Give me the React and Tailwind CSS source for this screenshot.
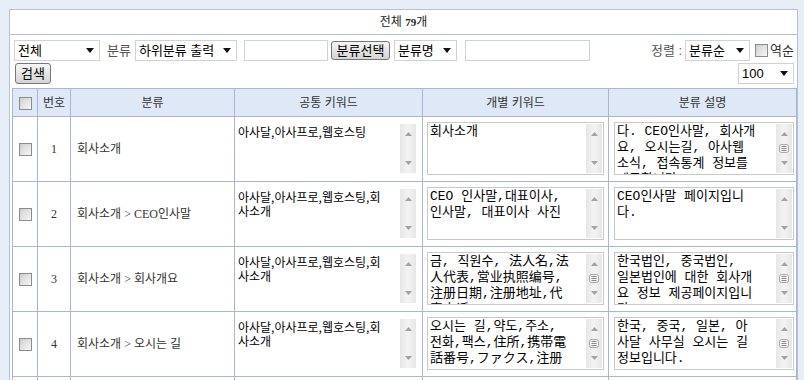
import React from 'react'

const SANS = 'font-["Liberation_Sans","Noto_Sans_CJK_KR",sans-serif]'
const SERIF = 'font-["Liberation_Serif","Noto_Sans_CJK_KR",serif]'
const MONO = 'font-["Liberation_Mono","Noto_Sans_CJK_KR",monospace]'

const COMMON = ['아사달,아사프로,웹호스팅,회', '사소개']

const ROWS = [
  {
    no: 1,
    cat: '회사소개',
    common: ['아사달,아사프로,웹호스팅'],
    kw: ['회사소개'],
    kwThumb: false,
    desc: ['다. CEO인사말, 회사개', '요, 오시는길, 아사웹', '소식, 접속통계 정보를', '제공합니다.'],
    descThumb: true,
  },
  {
    no: 2,
    cat: '회사소개 > CEO인사말',
    common: COMMON,
    kw: ['CEO 인사말,대표이사,', '인사말, 대표이사 사진'],
    kwThumb: false,
    desc: ['CEO인사말 페이지입니', '다.'],
    descThumb: false,
  },
  {
    no: 3,
    cat: '회사소개 > 회사개요',
    common: COMMON,
    kw: ['금, 직원수, 法人名,法', '人代表,営业执照编号,', '注册日期,注册地址,代', '表电话'],
    kwThumb: true,
    desc: ['한국법인, 중국법인,', '일본법인에 대한 회사개', '요 정보 제공페이지입니', '다.'],
    descThumb: true,
  },
  {
    no: 4,
    cat: '회사소개 > 오시는 길',
    common: COMMON,
    kw: ['오시는 길,약도,주소,', '전화,팩스,住所,携帯電', '話番号,ファクス,注册'],
    kwThumb: true,
    desc: ['한국, 중국, 일본, 아', '사달 사무실 오시는 길', '정보입니다.'],
    descThumb: true,
  },
  {
    no: 5,
    cat: '회사소개 > 아사웹소식',
    common: COMMON,
    kw: ['아사웹소식,공지사항'],
    kwThumb: false,
    desc: ['아사웹 소식 페이지입니', '다.'],
    descThumb: false,
  },
]

function Arrow() {
  return (
    <svg width="8" height="5" viewBox="0 0 8 5">
      <path d="M0 0h8L4 5z" fill="#111" />
    </svg>
  )
}

function Select({ label, className }) {
  return (
    <div
      className={`flex items-center justify-between h-[21px] border border-[#d2d2d2] bg-white pl-[3px] pr-[5px] text-[13px] text-black ${SANS} ${className}`}
    >
      <span className="whitespace-nowrap">{label}</span>
      <Arrow />
    </div>
  )
}

function Button({ children, className }) {
  return (
    <div
      className={`flex items-center justify-center border border-[#777] rounded-[3px] bg-gradient-to-b from-[#f6f6f6] to-[#d4d4d4] text-[13px] text-black ${SANS} ${className}`}
    >
      {children}
    </div>
  )
}

function Check() {
  return (
    <span className="inline-block align-middle w-[13px] h-[13px] border border-[#8c8c8c] bg-gradient-to-br from-[#cdcdcd] to-[#f7f7f7] p-[2px]">
      <span className="block w-full h-full bg-gradient-to-br from-[#d9d9d9] to-[#efefef]" />
    </span>
  )
}

function Scroll({ thumb }) {
  return (
    <div className="w-[16px] shrink-0 my-[1px] mr-[1px] bg-gradient-to-r from-[#e6e6e6] via-[#f3f3f3] to-[#e6e6e6] flex flex-col items-center justify-between py-[8px]">
      <svg width="7" height="4" viewBox="0 0 7 4">
        <path d="M0 4L3.5 0 7 4z" fill="#a2a2a2" />
      </svg>
      {thumb && (
        <svg width="10" height="9" viewBox="0 0 10 9">
          <rect x="0.5" y="0.5" width="9" height="8" rx="2" fill="#f4f4f4" stroke="#a6a6a6" />
          <path d="M2.5 2.5h5M2.5 4.5h5M2.5 6.5h5" stroke="#8a8a8a" />
        </svg>
      )}
      <svg width="7" height="4" viewBox="0 0 7 4">
        <path d="M0 0h7L3.5 4z" fill="#a2a2a2" />
      </svg>
    </div>
  )
}

function TextBox({ lines, thumb, bordered, text }) {
  return (
    <div
      className={`flex h-[53px] bg-white ${bordered ? 'border border-[#c9c9c9]' : 'border border-transparent'}`}
    >
      <div className={`flex-1 overflow-hidden pl-[2px] text-black ${text}`}>
        {lines.map((l, i) => (
          <div key={i} className="whitespace-pre">
            {l}
          </div>
        ))}
      </div>
      <Scroll thumb={thumb} />
    </div>
  )
}

export default function App() {
  const cell = 'border border-[#a8b7ce]'
  return (
    <div className="min-h-[380px] bg-[#e8eef8] pt-[9px] pl-[9px] pr-[6px]">
      <div className="border border-[#b3c1d6] bg-white">
        {/* title */}
        <div className={`h-[25px] border-b border-[#b3c1d6] flex items-center justify-center text-[12px] text-[#222] ${SANS}`}>
          전체&nbsp;<b className={`${SERIF} text-[11px]`}>79</b>개
        </div>

        {/* filters */}
        <div className="pt-[5px] pb-[4px] pl-[4px] pr-[3px]">
          <div className="flex items-center h-[21px]">
            <Select label="전체" className="w-[86px]" />
            <span className={`ml-[7px] text-[13px] text-[#555] ${SANS}`}>분류</span>
            <Select label="하위분류 출력" className="w-[102px] ml-[4px]" />
            <div className="w-[84px] h-[21px] ml-[7px] border border-[#d2d2d2]" />
            <Button className="w-[59px] h-[19px] ml-[3px]">분류선택</Button>
            <Select label="분류명" className="w-[63px] ml-[4px]" />
            <div className="w-[125px] h-[21px] ml-[8px] border border-[#d2d2d2]" />
            <div className="ml-auto flex items-center">
              <span className={`text-[13px] text-[#555] ${SANS}`}>정렬 :</span>
              <Select label="분류순" className="w-[65px] ml-[3px]" />
              <span className="ml-[5px] flex">
                <Check />
              </span>
              <span className={`ml-[2px] text-[13px] text-[#333] ${SANS}`}>역순</span>
            </div>
          </div>
          <div className="flex items-center justify-between mt-[2px] h-[21px]">
            <Button className="w-[36px] h-[21px] ml-[1px]">검색</Button>
            <Select label="100" className="w-[56px]" />
          </div>
        </div>

        {/* table */}
        <table className="ml-[2px] w-[784px] table-fixed border-collapse">
          <colgroup>
            <col className="w-[25px]" />
            <col className="w-[33px]" />
            <col className="w-[164px]" />
            <col className="w-[188px]" />
            <col className="w-[186px]" />
            <col className="w-[188px]" />
          </colgroup>
          <thead>
            <tr className={`bg-[#dfe8f6] text-[12px] text-[#333] ${SANS}`}>
              <th className={`${cell} h-[28px] p-0 font-normal`}>
                <Check />
              </th>
              <th className={`${cell} p-0 font-normal`}>번호</th>
              <th className={`${cell} p-0 font-normal`}>분류</th>
              <th className={`${cell} p-0 font-normal`}>공통 키워드</th>
              <th className={`${cell} p-0 font-normal`}>개별 키워드</th>
              <th className={`${cell} p-0 font-normal`}>분류 설명</th>
            </tr>
          </thead>
          <tbody>
            {ROWS.map((r) => (
              <tr key={r.no} className="text-[12px] text-[#333]">
                <td className={`${cell} p-0 text-center`}>
                  <Check />
                </td>
                <td className={`${cell} p-0 text-center ${SERIF}`}>{r.no}</td>
                <td className={`${cell} pl-[6px] pr-0 py-0 whitespace-nowrap ${SERIF}`}>{r.cat}</td>
                <td className={`${cell} pl-0 pr-[4px] pt-[5px] pb-[6px]`}>
                  <TextBox
                    lines={r.common}
                    thumb={false}
                    bordered={false}
                    text="pt-[2px] text-[12px] leading-[14px] font-['Noto_Sans_CJK_KR',sans-serif]"
                  />
                </td>
                <td className={`${cell} pl-[4px] pr-[4px] pt-[5px] pb-[6px]`}>
                  <TextBox lines={r.kw} thumb={r.kwThumb} bordered text={`pt-[1px] text-[13px] leading-[16px] ${MONO}`} />
                </td>
                <td className={`${cell} pl-[5px] pr-[2px] pt-[5px] pb-[6px]`}>
                  <TextBox lines={r.desc} thumb={r.descThumb} bordered text={`pt-[1px] text-[13px] leading-[16px] ${MONO}`} />
                </td>
              </tr>
            ))}
          </tbody>
        </table>
      </div>
    </div>
  )
}
